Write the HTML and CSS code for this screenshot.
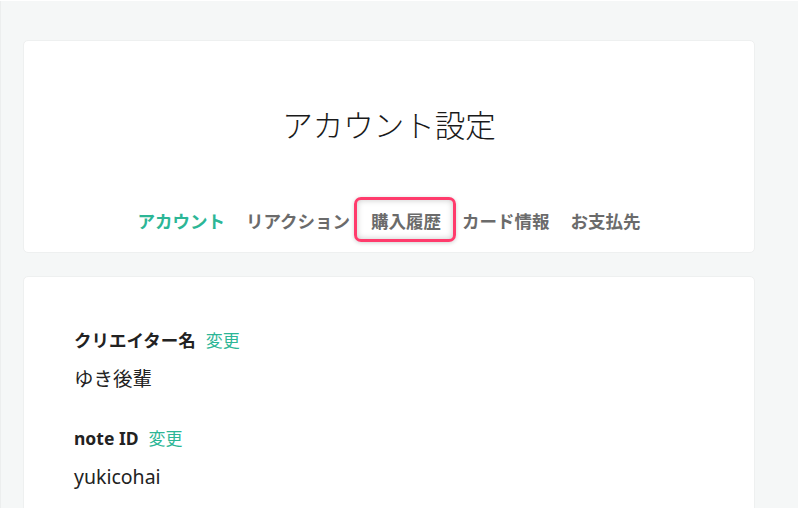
FILE: index.html
```html
<!DOCTYPE html>
<html lang="ja">
<head>
<meta charset="utf-8">
<title>アカウント設定</title>
<link rel="stylesheet" href="styles.css">
</head>
<body>
<div class="page">
  <section class="card header-card">
    <h1 class="title">アカウント設定</h1>
    <nav class="tabs">
      <span class="tab tab-active">アカウント</span>
      <span class="tab">リアクション</span>
      <span class="tab tab-marked">購入履歴</span>
      <span class="tab">カード情報</span>
      <span class="tab">お支払先</span>
    </nav>
  </section>
  <section class="card body-card">
    <div class="field">
      <div class="label-row"><span class="label">クリエイター名</span><a class="change">変更</a></div>
      <div class="value">ゆき後輩</div>
    </div>
    <div class="field">
      <div class="label-row"><span class="label">note ID</span><a class="change">変更</a></div>
      <div class="value">yukicohai</div>
    </div>
  </section>
</div>
</body>
</html>
```
FILE: styles.css
```css
html, body {
  margin: 0;
  padding: 0;
  background: #ffffff;
}
body {
  font-family: "Noto Sans", "Noto Sans CJK JP", sans-serif;
  color: #222222;
}
.page {
  box-sizing: border-box;
  width: 798px;
  height: 507px;
  margin-top: 1px;
  background: #f5f7f7;
  border-left: 1px solid #eceeee;
  padding: 39px 43px 0 22px;
  overflow: hidden;
  display: flex;
  flex-direction: column;
  gap: 23px;
}
.card {
  background: #ffffff;
  border: 1px solid #eef0f0;
  border-radius: 5px;
  box-sizing: border-box;
  flex-shrink: 0;
}
.header-card {
  height: 213px;
  padding-top: 63px;
  display: flex;
  flex-direction: column;
  align-items: center;
}
.title {
  margin: 0;
  font-family: "Noto Sans CJK JP", sans-serif;
  font-weight: 300;
  font-size: 30.5px;
  line-height: 40px;
  color: #1a1a1a;
}
.tabs {
  margin-top: 65px;
  display: flex;
  gap: 21px;
  font-family: "Noto Sans CJK JP", sans-serif;
  font-weight: 700;
  font-size: 17.5px;
  line-height: 24px;
  color: #6b6b6b;
}
.tab {
  position: relative;
}
.tab-active {
  color: #2cb696;
}
.tab-marked::after {
  content: "";
  position: absolute;
  top: -12px;
  bottom: -9px;
  left: -17px;
  right: -15px;
  border: 3px solid #ff3b6c;
  border-radius: 7px;
  box-shadow: inset 0 0 6px rgba(0, 0, 0, 0.22), 0 1px 4px rgba(0, 0, 0, 0.18);
}
.body-card {
  height: 400px;
  padding: 51px 50px 0;
}
.field + .field {
  margin-top: 33px;
}
.label-row {
  display: flex;
  align-items: baseline;
  gap: 10px;
  line-height: 24px;
  font-size: 17.5px;
}
.label {
  font-weight: 700;
  color: #222222;
}
.change {
  color: #2cb696;
  font-family: "Noto Sans CJK JP", sans-serif;
  font-weight: 400;
  font-size: 17px;
}
.value {
  margin-top: 13px;
  font-size: 19.5px;
  line-height: 28px;
  color: #222222;
}
```
